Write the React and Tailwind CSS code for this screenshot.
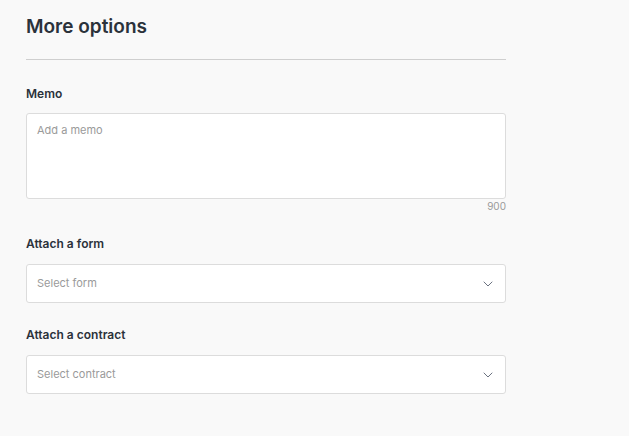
export default function App() {
  const Chevron = () => (
    <svg width="10" height="6" viewBox="0 0 10 6" fill="none" className="shrink-0">
      <path d="M1 1l4 4 4-4" stroke="#6b7280" strokeWidth="1" strokeLinecap="round" strokeLinejoin="round" />
    </svg>
  );
  return (
    <div className="w-[629px] h-[436px] bg-[#f9f9f9] font-['Inter',sans-serif] text-[#2b323b]">
      <div className="w-[480px] ml-[26px] pt-[15px]">
        <h1 className="text-[19px] leading-[24px] font-semibold">More options</h1>
        <div className="mt-[20px] border-t border-[#cfcfcf]" />
        <div className="mt-[26px] text-[12px] leading-[16px] font-semibold">Memo</div>
        <div className="mt-[11px] h-[86px] bg-white border border-[#dcdcdc] rounded-[3px] px-[10px] py-[9px] text-[11px] leading-[14px] text-[#9a9a9a]">
          Add a memo
        </div>
        <div className="mt-[1px] text-right text-[10px] leading-[12px] text-[#9a9a9a]">900</div>
        <div className="mt-[24px] text-[12px] leading-[16px] font-semibold">Attach a form</div>
        <div className="mt-[12px] h-[39px] bg-white border border-[#dcdcdc] rounded-[3px] pl-[10px] pr-[12px] flex items-center justify-between text-[11px] text-[#9a9a9a]">
          <span>Select form</span>
          <Chevron />
        </div>
        <div className="mt-[24px] text-[12px] leading-[16px] font-semibold">Attach a contract</div>
        <div className="mt-[12px] h-[39px] bg-white border border-[#dcdcdc] rounded-[3px] pl-[10px] pr-[12px] flex items-center justify-between text-[11px] text-[#9a9a9a]">
          <span>Select contract</span>
          <Chevron />
        </div>
      </div>
    </div>
  );
}
